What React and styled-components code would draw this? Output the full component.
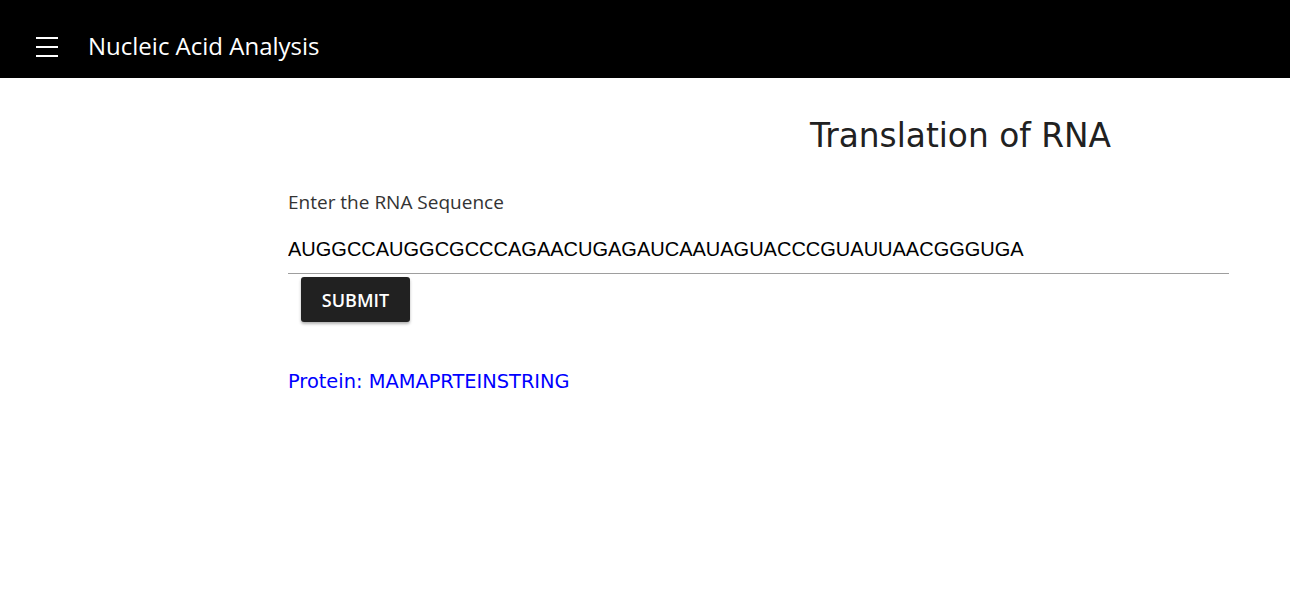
import * as React from 'react';
import styled, { createGlobalStyle } from 'styled-components';

const GlobalStyle = createGlobalStyle`
  html, body {
    margin: 0;
    padding: 0;
    background: #fff;
  }
`

const Header = styled.header`
  box-sizing: border-box;
  height: 78px;
  padding: 15px 0 0 36px;
  background: #000;
  display: flex;
  align-items: center;
  gap: 30px;
`

const MenuButton = styled.div`
  width: 22px;
  height: 20px;
  svg {
    display: block;
  }
`

const Brand = styled.div`
  color: #fff;
  font-family: "Open Sans", "Noto Sans", sans-serif;
  font-size: 24px;
  margin-top: -3px;
`

const Main = styled.main`
  padding: 38px 61px 0 288px;
`

const Title = styled.h1`
  margin: 0;
  padding-left: 522px;
  font-family: "DejaVu Sans", Verdana, sans-serif;
  font-weight: 400;
  font-size: 32.8px;
  line-height: 40px;
  color: #212121;
`

const Label = styled.label`
  display: block;
  margin-top: 34px;
  font-family: "Open Sans", "Noto Sans", sans-serif;
  font-size: 19px;
  line-height: 24px;
  color: #333;
`

const SeqInput = styled.input`
  display: block;
  width: 100%;
  box-sizing: border-box;
  margin-top: 22px;
  padding: 0 0 11px 0;
  border: none;
  border-bottom: 1px solid #9e9e9e;
  outline: none;
  background: transparent;
  font-family: "Liberation Sans", Arial, sans-serif;
  font-size: 20px;
  line-height: 26px;
  color: #000;
`

const SubmitButton = styled.button`
  display: block;
  margin: 3px 0 0 13px;
  width: 109px;
  height: 45px;
  border: none;
  border-radius: 3px;
  background: #212121;
  color: #fff;
  font-family: "Open Sans", "Noto Sans", sans-serif;
  font-size: 18px;
  font-weight: 600;
  text-transform: uppercase;
  box-shadow: 0 2px 3px rgba(0, 0, 0, 0.3);
  cursor: pointer;
`

const Result = styled.p`
  margin: 48px 0 0 0;
  font-family: "DejaVu Sans", Verdana, sans-serif;
  font-size: 19.4px;
  line-height: 24px;
  color: #0000ff;
`

export default function App() {
  const [seq, setSeq] = React.useState('AUGGCCAUGGCGCCCAGAACUGAGAUCAAUAGUACCCGUAUUAACGGGUGA')

  return <>
    <GlobalStyle />
    <Header>
      <MenuButton>
        <svg width="22" height="20" viewBox="0 0 22 20">
          <rect x="0" y="0" width="22" height="2" fill="#fff" />
          <rect x="0" y="9" width="22" height="2" fill="#fff" />
          <rect x="0" y="18" width="22" height="2" fill="#fff" />
        </svg>
      </MenuButton>
      <Brand>Nucleic Acid Analysis</Brand>
    </Header>
    <Main>
      <Title>Translation of RNA</Title>
      <Label htmlFor="rna">Enter the RNA Sequence</Label>
      <SeqInput id="rna" value={seq} onChange={e => setSeq(e.target.value)} />
      <SubmitButton>Submit</SubmitButton>
      <Result>Protein: MAMAPRTEINSTRING</Result>
    </Main>
  </>
}
